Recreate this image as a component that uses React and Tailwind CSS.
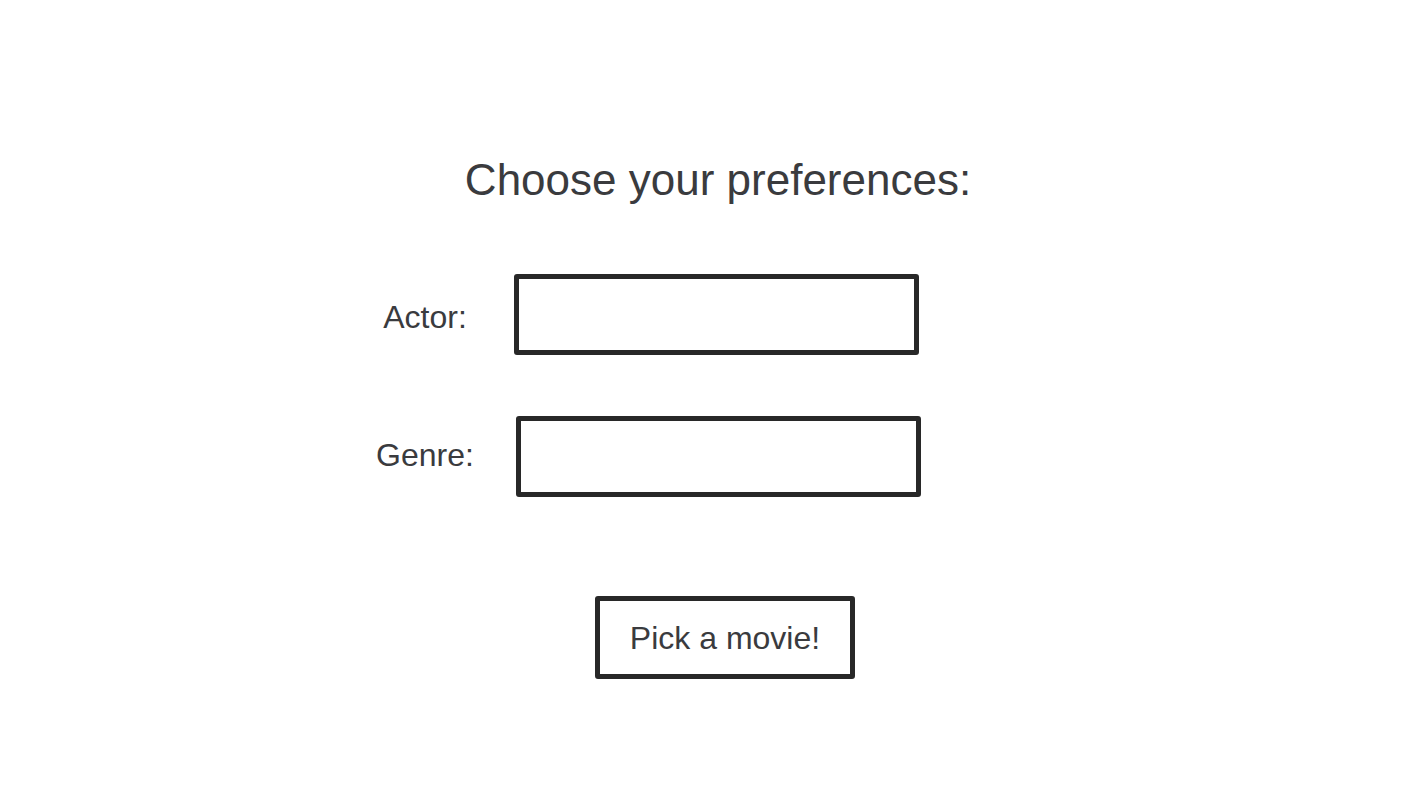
import React from 'react';

const FIELDS = [
  { label: 'Actor:', gap: 'ml-[24px]', nudge: 'pt-1' },
  { label: 'Genre:', gap: 'ml-[26px]', nudge: 'pb-1' }
];

const App = () => {
  return (
    <div className="min-h-screen bg-white text-[#3a3b3e]" style={{ fontFamily: '"Liberation Sans", Arial, sans-serif' }}>
      {/* Title */}
      <h1 className="pt-[158px] pl-[14px] text-center text-[44px] leading-none font-normal">Choose your preferences:</h1>

      {/* Fields */}
      <form className="mt-[72px] pl-[360px] flex flex-col gap-[61px]" onSubmit={e => e.preventDefault()}>
        {FIELDS.map(f => (
          <div key={f.label} className="flex items-center">
            <label className={`w-[130px] ${f.nudge} text-center text-[32px] leading-none`}>{f.label}</label>
            <input type="text" className={`${f.gap} w-[405px] h-[81px] border-[5px] border-[#282828] rounded-[3px] bg-white outline-none px-3 text-[28px]`} />
          </div>
        ))}

        {/* Submit */}
        <div className="mt-[38px] -ml-[360px] flex justify-center pl-[28px]">
          <button type="submit" className="w-[260px] h-[83px] border-[5px] border-[#282828] rounded-[3px] bg-white text-[32px] leading-none text-[#3a3b3e]">
            Pick a movie!
          </button>
        </div>
      </form>
    </div>
  );
};

export default App;
